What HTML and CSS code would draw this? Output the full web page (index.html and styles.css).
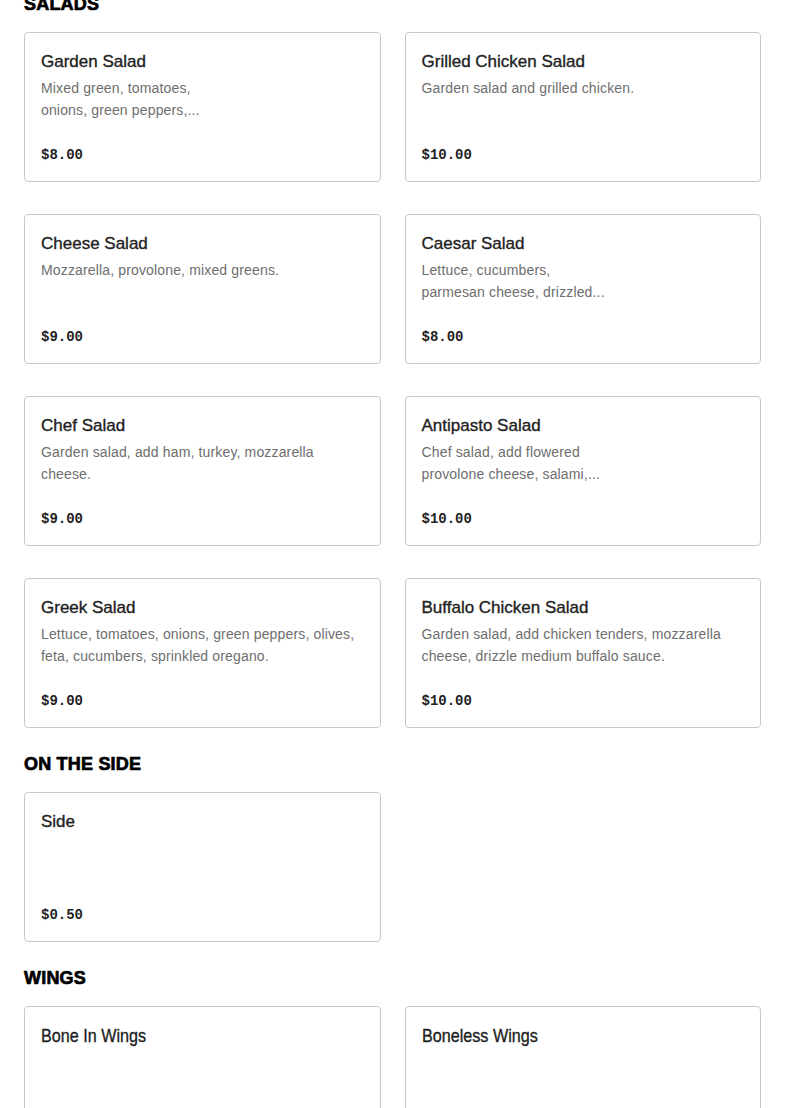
FILE: index.html
```html
<!DOCTYPE html>
<html lang="en">
<head>
<meta charset="UTF-8">
<meta name="viewport" content="width=device-width, initial-scale=1.0">
<title>Menu</title>
<link rel="stylesheet" href="styles.css">
</head>
<body>

<div id="menu">
    <section class="category">
        <h2 class="category-title first">SALADS</h2>
        <div class="grid">
            <div class="item">
                <h3 class="item-name">Garden Salad</h3>
                <p class="item-desc">Mixed green, tomatoes,<br>onions, green peppers,...</p>
                <span class="price">$8.00</span>
            </div>
            <div class="item">
                <h3 class="item-name">Grilled Chicken Salad</h3>
                <p class="item-desc">Garden salad and grilled chicken.</p>
                <span class="price">$10.00</span>
            </div>
            <div class="item">
                <h3 class="item-name">Cheese Salad</h3>
                <p class="item-desc">Mozzarella, provolone, mixed greens.</p>
                <span class="price">$9.00</span>
            </div>
            <div class="item">
                <h3 class="item-name">Caesar Salad</h3>
                <p class="item-desc">Lettuce, cucumbers,<br>parmesan cheese, drizzled...</p>
                <span class="price">$8.00</span>
            </div>
            <div class="item">
                <h3 class="item-name">Chef Salad</h3>
                <p class="item-desc">Garden salad, add ham, turkey, mozzarella cheese.</p>
                <span class="price">$9.00</span>
            </div>
            <div class="item">
                <h3 class="item-name">Antipasto Salad</h3>
                <p class="item-desc">Chef salad, add flowered<br>provolone cheese, salami,...</p>
                <span class="price">$10.00</span>
            </div>
            <div class="item">
                <h3 class="item-name">Greek Salad</h3>
                <p class="item-desc">Lettuce, tomatoes, onions, green peppers, olives, feta, cucumbers, sprinkled oregano.</p>
                <span class="price">$9.00</span>
            </div>
            <div class="item">
                <h3 class="item-name">Buffalo Chicken Salad</h3>
                <p class="item-desc">Garden salad, add chicken tenders, mozzarella cheese, drizzle medium buffalo sauce.</p>
                <span class="price">$10.00</span>
            </div>
        </div>
    </section>

    <section class="category">
        <h2 class="category-title">ON THE SIDE</h2>
        <div class="grid">
            <div class="item">
                <h3 class="item-name">Side</h3>
                <p class="item-desc"></p>
                <span class="price">$0.50</span>
            </div>
        </div>
    </section>

    <section class="category">
        <h2 class="category-title">WINGS</h2>
        <div class="grid">
            <div class="item">
                <h3 class="item-name"><span class="condensed">Bone In Wings</span></h3>
                <p class="item-desc"></p>
            </div>
            <div class="item">
                <h3 class="item-name"><span class="condensed">Boneless Wings</span></h3>
                <p class="item-desc"></p>
            </div>
        </div>
    </section>
</div>

</body>
</html>
```

FILE: styles.css
```css
body {
    margin: 0;
    background-color: #fff;
    color: #222;
    font-family: 'Liberation Sans', Arial, sans-serif;
    overflow: hidden;
}

#menu {
    padding: 0 24px;
}

.category {
    margin-bottom: 24px;
}

.category-title {
    margin: 0 0 16px 0;
    font-family: 'Liberation Sans', Arial, sans-serif;
    font-weight: 900;
    font-size: 18px;
    line-height: 24px;
    color: #000;
    -webkit-text-stroke: 0.7px #000;
    letter-spacing: 0.2px;
}

.category-title.first {
    margin-top: -8px;
}

.grid {
    display: grid;
    grid-template-columns: 1fr 1fr;
    column-gap: 24px;
    row-gap: 32px;
}

.item {
    height: 150px;
    box-sizing: border-box;
    border: 1px solid #c8c8c8;
    border-radius: 4px;
    padding: 16px;
    display: flex;
    flex-direction: column;
}

.item-name {
    margin: 1px 0 3px 0;
    font-size: 17px;
    line-height: 24px;
    font-weight: normal;
    color: #222;
    -webkit-text-stroke: 0.35px #222;
}

.condensed {
    display: inline-block;
    font-size: 19px;
    transform: scaleX(0.85);
    transform-origin: left center;
}

.item-desc {
    margin: 0;
    font-size: 14px;
    line-height: 22px;
    letter-spacing: 0.15px;
    color: #6e6e6e;
    min-height: 44px;
}

.price {
    margin-top: auto;
    font-family: 'Liberation Mono', 'Courier New', monospace;
    font-weight: bold;
    font-size: 14px;
    line-height: 20px;
    color: #222;
}
```
